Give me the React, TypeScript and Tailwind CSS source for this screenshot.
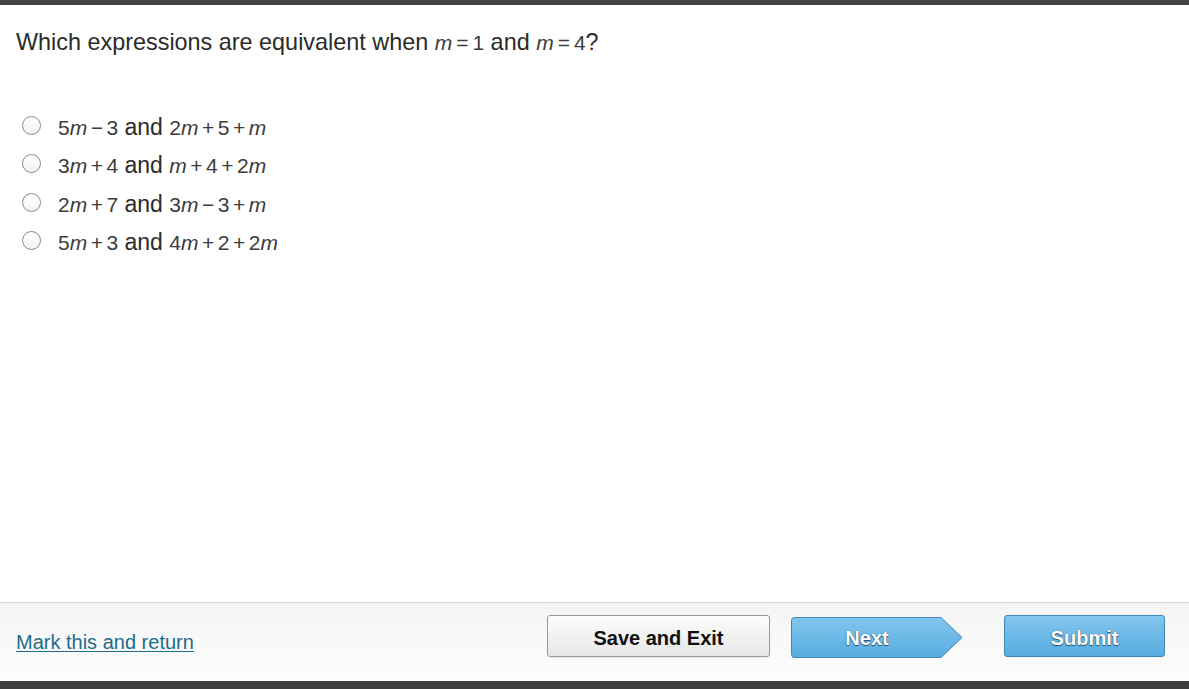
import React from "react";

const M = () => <i className="italic">m</i>;
const Op = ({ c, gap }: { c: string; gap: string }) => <span className={gap}>{c}</span>;

function Math({
  parts,
  size = "text-[21px]",
  gap = "mx-[3.5px]",
}: {
  parts: (string | "m")[];
  size?: string;
  gap?: string;
}) {
  return (
    <span className={`${size} text-[#3c3c3c] [font-family:'Liberation_Sans',Arial,sans-serif]`}>
      {parts.map((p, i) =>
        p === "m" ? (
          <M key={i} />
        ) : p === "+" || p === "−" || p === "=" ? (
          <Op key={i} c={p} gap={gap} />
        ) : (
          <span key={i}>{p}</span>
        )
      )}
    </span>
  );
}

const options: [(string | "m")[], (string | "m")[]][] = [
  [["5", "m", "−", "3"], ["2", "m", "+", "5", "+", "m"]],
  [["3", "m", "+", "4"], ["m", "+", "4", "+", "2", "m"]],
  [["2", "m", "+", "7"], ["3", "m", "−", "3", "+", "m"]],
  [["5", "m", "+", "3"], ["4", "m", "+", "2", "+", "2", "m"]],
];

export default function App() {
  return (
    <div className="w-[1189px] h-[689px] flex flex-col bg-white [font-family:'Liberation_Sans',Arial,sans-serif] text-[#2b2b2b] overflow-hidden">
      <div className="h-[5px] bg-[#444444] shrink-0" />
      <main className="flex-1 px-4 pt-[23px]">
        <p className="text-[23.4px] leading-[28px]">
          Which expressions are equivalent when{" "}
          <Math parts={["m", "=", "1"]} size="text-[21px]" gap="mx-[4px]" /> and{" "}
          <Math parts={["m", "=", "4"]} size="text-[21px]" gap="mx-[4px]" />?
        </p>
        <div className="mt-[52px] flex flex-col">
          {options.map((o, i) => (
            <label key={i} className="flex items-center h-[38.5px]">
              <span className="relative -top-[3px] ml-[6px] w-[19px] h-[19px] rounded-full border border-[#8a8a8a] bg-gradient-to-b from-white to-[#f3f3f3] shrink-0" />
              <span className="relative -top-[1px] ml-[17px] text-[23px] leading-[28px]">
                <Math parts={o[0]} /> and <Math parts={o[1]} />
              </span>
            </label>
          ))}
        </div>
      </main>
      <footer className="h-[79px] shrink-0 border-t border-[#d8d8d8] bg-gradient-to-b from-[#f4f4f5] to-[#fdfdfd] flex items-start">
        <a
          href="#"
          className="ml-4 mt-[24px] text-[20px] text-[#1d6c8a] underline underline-offset-[2px] decoration-1"
        >
          Mark this and return
        </a>
        <div className="ml-auto flex items-start mt-[12px] mr-[24px]">
          <button className="w-[223px] h-[42px] pt-[4px] rounded-[3px] border border-[#9a9a9a] bg-gradient-to-b from-[#fdfdfd] to-[#e6e6e6] text-[20px] font-bold text-[#111] shadow-[0_1px_1px_rgba(0,0,0,0.08)]">
            Save and Exit
          </button>
          <button className="relative ml-[21px] mt-[2px] w-[172px] h-[42px] text-[20px] font-bold text-white [text-shadow:0_1px_1px_#1d4f70,0_0_1px_#1d4f70]">
            <svg className="absolute inset-0" width="172" height="42" viewBox="0 0 172 42">
              <defs>
                <linearGradient id="ng" x1="0" y1="0" x2="0" y2="1">
                  <stop offset="0" stopColor="#82c6ee" />
                  <stop offset="1" stopColor="#57acdf" />
                </linearGradient>
              </defs>
              <path
                d="M3.5 0.5 H150 L171 20.5 L150 40.5 H3.5 Q0.5 40.5 0.5 37.5 V3.5 Q0.5 0.5 3.5 0.5 Z"
                fill="url(#ng)"
                stroke="#3f88b5"
                strokeWidth="1"
              />
            </svg>
            <span className="relative -ml-[20px]">Next</span>
          </button>
          <button className="ml-[41px] w-[161px] h-[42px] pt-[4px] rounded-[3px] border border-[#3f88b5] bg-gradient-to-b from-[#82c6ee] to-[#57acdf] text-[20px] font-bold text-white [text-shadow:0_1px_1px_#1d4f70,0_0_1px_#1d4f70]">
            Submit
          </button>
        </div>
      </footer>
      <div className="h-[8px] bg-[#3d3d3d] shrink-0" />
    </div>
  );
}
